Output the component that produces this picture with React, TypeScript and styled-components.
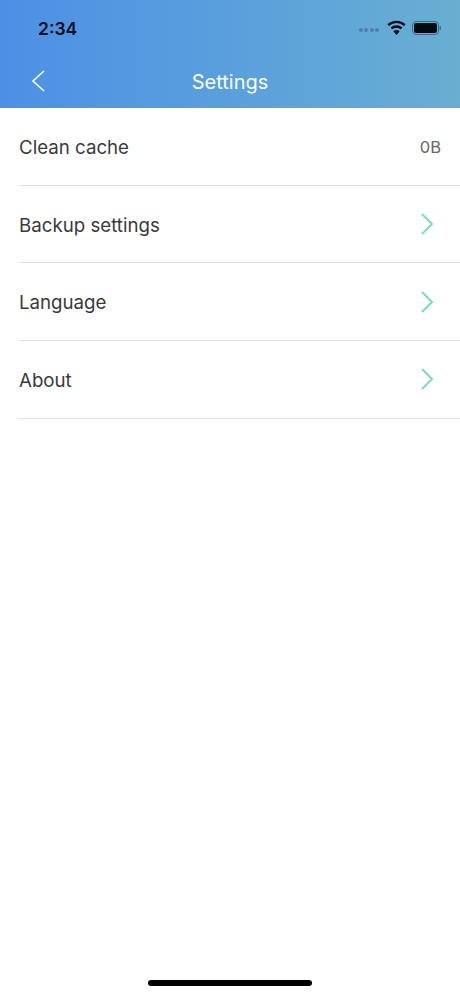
import styled, { createGlobalStyle } from 'styled-components';

const GlobalStyle = createGlobalStyle`
  html, body {
    margin: 0;
    padding: 0;
    background: #fff;
    font-family: Inter, "Liberation Sans", sans-serif;
  }
`;

const Screen = styled.div`
  position: relative;
  width: 460px;
  height: 996px;
  overflow: hidden;
  background: #fff;
  display: flex;
  flex-direction: column;
`;

const Header = styled.header`
  height: 108px;
  flex-shrink: 0;
  background: linear-gradient(90deg, #4c90e6 0%, #68afd2 100%);
  display: flex;
  flex-direction: column;
`;

const StatusBar = styled.div`
  height: 55px;
  display: flex;
  align-items: center;
  justify-content: space-between;
  padding: 0 18px 0 38px;
  box-sizing: border-box;
`;

const Time = styled.span`
  font-size: 17.5px;
  font-weight: 600;
  margin-top: 2px;
  color: #07111f;
`;

const StatusIcons = styled.div`
  display: flex;
  align-items: center;
`;

const SignalDots = styled.div`
  display: flex;
  gap: 1.5px;
  margin-right: 8px;
  margin-top: 5px;
`;

const SignalDot = styled.span`
  width: 4px;
  height: 4px;
  border-radius: 50%;
  background: #4f7fa6;
`;

const NavBar = styled.div`
  flex: 1;
  display: flex;
  align-items: center;
  padding: 0 0 0 30px;
  position: relative;
`;

const BackButton = styled.button`
  border: 0;
  padding: 0;
  background: none;
  display: flex;
  margin-bottom: 1px;
`;

const Title = styled.h1`
  position: absolute;
  left: 0;
  right: 0;
  margin: 0;
  text-align: center;
  font-size: 20px;
  font-weight: 400;
  color: #fff;
`;

const List = styled.ul`
  list-style: none;
  margin: 0;
  padding: 0 0 0 18px;
`;

const Row = styled.li`
  height: 77.7px;
  box-sizing: border-box;
  display: flex;
  align-items: center;
  justify-content: space-between;
  padding: 0 19px 0 1px;
  border-bottom: 1px solid #e2e2e2;
`;

const Label = styled.span`
  font-size: 18.7px;
  margin-top: 2px;
  color: #3a3a3a;
`;

const Value = styled.span`
  font-size: 16.5px;
  margin-top: 2px;
  color: #666;
`;

const Chevron = styled.svg`
  width: 14px;
  height: 24px;
  margin-right: 7px;
  fill: none;
  stroke: #7fd8bd;
  stroke-width: 2;
`;

const HomeIndicator = styled.div`
  position: absolute;
  left: 148px;
  bottom: 10px;
  width: 164px;
  height: 6px;
  border-radius: 3px;
  background: #000;
`;

const rows = ['Backup settings', 'Language', 'About'];

export default function App() {
  return (
    <>
      <GlobalStyle />
      <Screen>
        <Header>
          <StatusBar>
            <Time>2:34</Time>
            <StatusIcons>
              <SignalDots>
                {[0, 1, 2, 3].map((i) => (
                  <SignalDot key={i} />
                ))}
              </SignalDots>
              <svg width="19" height="15" viewBox="0 0 19 15" fill="none" stroke="#050a10" strokeWidth="2.4">
                <path d="M1.2 5.2C6 .8 13 .8 17.8 5.2" />
                <path d="M4.4 8.3c2.9-2.5 7.3-2.5 10.2 0" />
                <path d="M9.5 14.4 6.9 11.3c1.5-1 3.7-1 5.2 0z" fill="#050a10" strokeWidth="1" />
              </svg>
              <svg width="30" height="14" viewBox="0 0 30 14" style={{ marginLeft: 6 }}>
                <rect x="0.5" y="0.5" width="26" height="13" rx="3.5" fill="none" stroke="#3d6a8c" />
                <rect x="2" y="2" width="23" height="10" rx="2.2" fill="#050a10" />
                <rect x="27.5" y="5" width="1.5" height="4" rx="0.7" fill="#3d6a8c" />
              </svg>
            </StatusIcons>
          </StatusBar>
          <NavBar>
            <BackButton aria-label="Back">
              <svg width="16" height="24" viewBox="0 0 16 24" fill="none" stroke="#fff" strokeWidth="1.6">
                <path d="M14 2 3 12l11 10" />
              </svg>
            </BackButton>
            <Title>Settings</Title>
          </NavBar>
        </Header>
        <List>
          <Row>
            <Label>Clean cache</Label>
            <Value>0B</Value>
          </Row>
          {rows.map((label) => (
            <Row key={label}>
              <Label>{label}</Label>
              <Chevron viewBox="0 0 14 24">
                <path d="M2 2l10 10L2 22" />
              </Chevron>
            </Row>
          ))}
        </List>
        <HomeIndicator />
      </Screen>
    </>
  );
}
